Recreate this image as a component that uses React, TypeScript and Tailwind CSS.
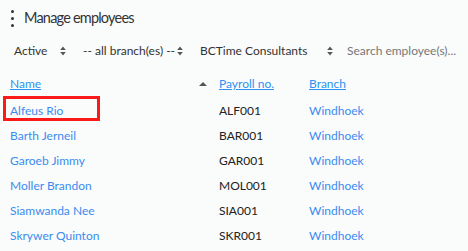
const employees = [
  { name: 'Alfeus Rio', payroll: 'ALF001', branch: 'Windhoek' },
  { name: 'Barth Jerneil', payroll: 'BAR001', branch: 'Windhoek' },
  { name: 'Garoeb Jimmy', payroll: 'GAR001', branch: 'Windhoek' },
  { name: 'Moller Brandon', payroll: 'MOL001', branch: 'Windhoek' },
  { name: 'Siamwanda Nee', payroll: 'SIA001', branch: 'Windhoek' },
  { name: 'Skrywer Quinton', payroll: 'SKR001', branch: 'Windhoek' },
];

function SortArrows() {
  return (
    <svg width="6" height="10" viewBox="0 0 6 10" className="text-[#555]">
      <path d="M3 0.5 L5.8 4 L0.2 4 Z" fill="currentColor" />
      <path d="M3 9.5 L5.8 6 L0.2 6 Z" fill="currentColor" />
    </svg>
  );
}

export default function App() {
  return (
    <div className="w-[468px] h-[251px] bg-[#fafbfb] text-[#333] overflow-hidden" style={{ fontFamily: 'Lato, sans-serif' }}>
      <div className="flex items-center h-[36px] pl-[11px]">
        <div className="flex flex-col gap-[4px] mr-[10px]">
          <span className="block w-[3px] h-[3px] rounded-full bg-[#333]" />
          <span className="block w-[3px] h-[3px] rounded-full bg-[#333]" />
          <span className="block w-[3px] h-[3px] rounded-full bg-[#333]" />
        </div>
        <h1 className="text-[14.5px] tracking-[-0.8px] text-[#333]">Manage employees</h1>
      </div>

      <div className="flex items-center h-[30px] text-[12px] pl-[14px]">
        <div className="flex items-center justify-between w-[52px]">
          <span>Active</span>
          <SortArrows />
        </div>
        <div className="flex items-center justify-between w-[100px] ml-[17px]">
          <span>-- all branch(es) --</span>
          <SortArrows />
        </div>
        <div className="flex items-center justify-between w-[133px] ml-[17px]">
          <span>BCTime Consultants</span>
          <SortArrows />
        </div>
        <span className="ml-[14px] text-[#777]">Search employee(s)...</span>
      </div>

      <div className="text-[12px] mt-[4px]">
        <div className="flex items-center h-[28px]">
          <div className="flex items-center w-[219px] pl-[10px]">
            <span className="underline text-[#2c93f2]">Name</span>
            <svg width="8" height="4" viewBox="0 0 8 4" className="ml-auto mr-[12px] text-[#555]">
              <path d="M4 0 L8 4 L0 4 Z" fill="currentColor" />
            </svg>
          </div>
          <div className="w-[90px]">
            <span className="underline text-[#2c93f2]">Payroll no.</span>
          </div>
          <span className="underline text-[#2c93f2]">Branch</span>
        </div>

        {employees.map((e, i) => (
          <div key={e.payroll} className="relative flex items-center h-[25px]">
            <div className="w-[219px] pl-[10px] text-[#3b8cf0]">{e.name}</div>
            <div className="w-[90px] text-[#222]">{e.payroll}</div>
            <div className="text-[#3b8cf0]">{e.branch}</div>
            {i === 0 && (
              <div className="absolute left-[3px] top-[-2px] w-[97px] h-[25px] border-[3px] border-[#fb1a1a]" />
            )}
          </div>
        ))}
      </div>
    </div>
  );
}
